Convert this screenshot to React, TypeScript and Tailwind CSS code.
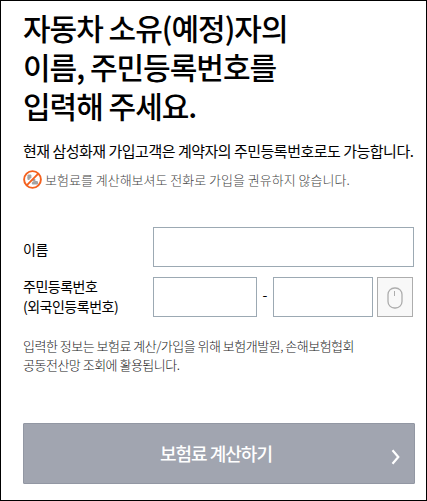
import { useState } from "react";

const NoCallIcon = () => (
  <svg width="19" height="19" viewBox="0 0 19 19" fill="none" className="shrink-0">
    <g fill="#a3a3a3">
      <rect x="4.4" y="4.4" width="4" height="4" rx="1.2" />
      <rect x="11" y="11" width="4" height="3.6" rx="1.2" />
      <rect x="4.4" y="7" width="2.4" height="3" rx="1" />
      <rect x="8.8" y="12" width="3" height="2.4" rx="1" />
      <rect x="9.4" y="8.8" width="3" height="3" rx="1" />
    </g>
    <circle cx="9.5" cy="9.5" r="8.4" stroke="#f4611e" strokeWidth="1.9" />
    <path d="M15.3 3.7 3.7 15.3" stroke="#f4611e" strokeWidth="1.9" />
  </svg>
);

const MouseIcon = () => (
  <svg width="16" height="22" viewBox="0 0 16 22" fill="none" stroke="#adadad">
    <rect x="1" y="1" width="14" height="20" rx="6.5" strokeWidth="1.3" />
    <path d="M7.5 4v5" />
  </svg>
);

const inputStyle = "h-10 border border-[#9ca9b3] bg-white px-2 text-sm outline-none";

const App = () => {
  const [name, setName] = useState("");
  const [front, setFront] = useState("");
  const [back, setBack] = useState("");

  return (
    <div className="h-[501px] w-[427px] overflow-hidden border border-black bg-white pl-[22px] font-['Noto_Sans_CJK_KR','Noto_Sans',sans-serif] text-black">
      <h1 className="pt-[7px] text-[30px] leading-[39px] font-medium tracking-[-1px] whitespace-nowrap">
        <span className="block">자동차 소유(예정)자의</span>
        <span className="block">이름, 주민등록번호를</span>
        <span className="block">입력해 주세요.</span>
      </h1>

      <p className="mt-[15px] text-[15px] leading-[22px] tracking-[-0.5px] whitespace-nowrap">
        현재 삼성화재 가입고객은 계약자의 주민등록번호로도 가능합니다.
      </p>
      <div className="mt-2 flex h-[19px] items-center gap-[3px] text-[13px] leading-[19px] font-light whitespace-nowrap text-[#444]">
        <NoCallIcon />
        <span>보험료를 계산해보셔도 전화로 가입을 권유하지 않습니다.</span>
      </div>

      <form className="mt-[38px]" onSubmit={(e) => e.preventDefault()}>
        <div className="flex items-center">
          <label htmlFor="name" className="w-[130px] pt-[3px] text-sm leading-5 tracking-[-0.5px]">
            이름
          </label>
          <input
            id="name"
            className={`w-[261px] ${inputStyle}`}
            value={name}
            onChange={(e) => setName(e.target.value)}
          />
        </div>

        <div className="mt-2.5 flex items-center">
          <label htmlFor="front" className="-mt-0.5 w-[130px] text-sm leading-5 tracking-[-0.5px]">
            주민등록번호
            <br />
            (외국인등록번호)
          </label>
          <input
            id="front"
            className={`w-[104px] ${inputStyle}`}
            value={front}
            onChange={(e) => setFront(e.target.value)}
          />
          <span className="w-4 pb-1.5 text-center text-sm leading-5">-</span>
          <input
            type="password"
            className={`w-[100px] ${inputStyle}`}
            value={back}
            onChange={(e) => setBack(e.target.value)}
          />
          <button
            type="button"
            className="ml-1 flex h-10 w-9 items-center justify-center border border-[#adadad] bg-[#f8f8f8] pt-px"
          >
            <MouseIcon />
          </button>
        </div>

        <p className="mt-[19px] text-[13px] leading-[19px] font-light tracking-[-0.5px] whitespace-nowrap text-[#222]">
          입력한 정보는 보험료 계산/가입을 위해 보험개발원, 손해보험협회
          <br />
          공동전산망 조회에 활용됩니다.
        </p>

        <button
          type="submit"
          className="mt-[49px] grid h-[61px] w-[392px] grid-cols-[26px_1fr_26px] items-center rounded-[1px] border border-[#9297a3] bg-[#a1a5b0] text-lg font-medium tracking-[-1px] text-white"
        >
          <span className="col-start-2 -mt-0.5 pr-1.5 leading-6">보험료 계산하기</span>
          <svg width="10" height="16" viewBox="0 0 10 16" fill="none" className="mt-1.5 ml-[3px]">
            <path d="M1.5 1.2 7.3 8l-5.8 6.8" stroke="white" strokeWidth="2.2" />
          </svg>
        </button>
      </form>
    </div>
  );
};

export default App;
